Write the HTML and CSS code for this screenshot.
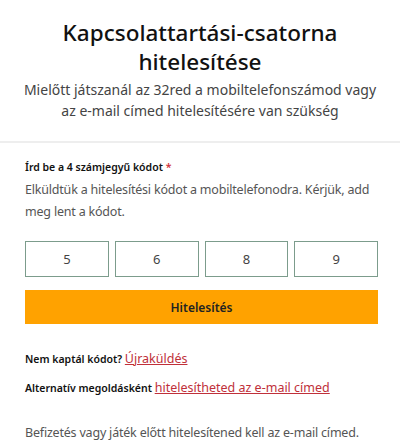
FILE: index.html
```html
<!DOCTYPE html>
<html lang="hu">
<head>
    <meta charset="UTF-8">
    <title>Hitelesítés</title>
    <link rel="stylesheet" href="styles.css">
</head>
<body>

<div class="header">
    <h1>Kapcsolattartási-csatorna hitelesítése</h1>
    <p>Mielőtt játszanál az 32red a mobiltelefonszámod vagy az e-mail címed hitelesítésére van szükség</p>
</div>

<div class="container">
    <label class="code-label">Írd be a 4 számjegyű kódot <span class="req">*</span></label>
    <p class="info">Elküldtük a hitelesítési kódot a mobiltelefonodra. Kérjük, add meg lent a kódot.</p>

    <div class="code-row">
        <input type="text" maxlength="1" value="5">
        <input type="text" maxlength="1" value="6">
        <input type="text" maxlength="1" value="8">
        <input type="text" maxlength="1" value="9" autofocus>
    </div>

    <button class="verify-btn">Hitelesítés</button>

    <p class="small-line">Nem kaptál kódot? <a href="#">Újraküldés</a></p>
    <p class="small-line">Alternatív megoldásként <a href="#">hitelesítheted az e-mail címed</a></p>

    <p class="note">Befizetés vagy játék előtt hitelesítened kell az e-mail címed.</p>
</div>

</body>
</html>
```

FILE: styles.css
```css
* {
    box-sizing: border-box;
    font-family: "Noto Sans", "DejaVu Sans", sans-serif;
}

body {
    margin: 0;
    padding: 0;
    background: #fff;
    color: #222;
}

.header {
    text-align: center;
    padding: 18px 20px 20px;
    border-bottom: 2px solid #eeeeee;
}

.header h1 {
    margin: 0 auto;
    width: 300px;
    font-size: 22.5px;
    font-weight: 500;
    line-height: 29px;
    color: #111;
}

.header p {
    margin: 3px 0 0;
    font-size: 14px;
    line-height: 21px;
    color: #444;
}

.container {
    padding: 17px 22px 0 25px;
}

.code-label {
    display: block;
    font-size: 10.5px;
    font-weight: 600;
    color: #111;
}

.req {
    color: #d0303a;
}

.info {
    margin: 5px 0 0;
    font-size: 12.5px;
    letter-spacing: -0.2px;
    line-height: 22px;
    color: #555;
}

.code-row {
    display: flex;
    gap: 6px;
    margin-top: 18px;
}

.code-row input {
    flex: 1;
    width: 0;
    height: 36px;
    border: 1px solid #7c9c8c;
    text-align: center;
    font-size: 13px;
    color: #444;
    outline: none;
}

.verify-btn {
    display: block;
    width: 100%;
    margin-top: 13px;
    height: 34px;
    border: none;
    background: #ffa200;
    color: #222;
    font-size: 12px;
    font-weight: 600;
}

.small-line {
    margin: 26px 0 0;
    font-size: 10.5px;
    font-weight: 600;
    color: #111;
}

.small-line + .small-line {
    margin-top: 12px;
}

.small-line a {
    font-size: 12.5px;
    font-weight: 400;
    color: #c0303a;
}

.note {
    margin: 28px 0 0;
    font-size: 12.5px;
    letter-spacing: -0.2px;
    color: #555;
}
```
